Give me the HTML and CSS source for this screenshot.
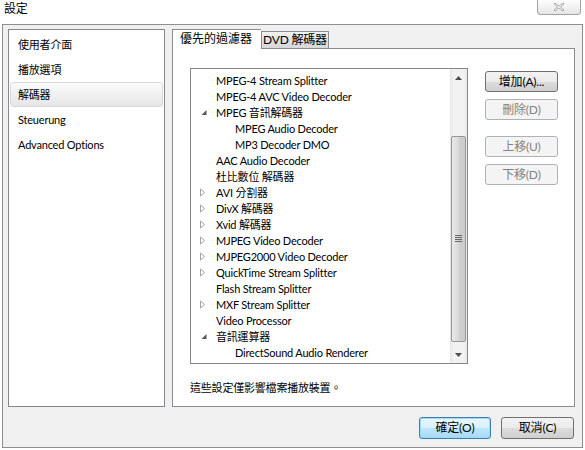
FILE: index.html
```html
<!DOCTYPE html>
<html lang="zh-Hant">
<head>
    <meta charset="UTF-8">
    <title>設定</title>
    <link rel="stylesheet" href="styles.css">
</head>
<body>
    <div class="titlebar">
        <span class="title">設定</span>
        <div class="close">
            <svg width="14" height="10" viewBox="0 0 14 10">
                <path d="M3 1 L7 4 L11 1 L12 2 L8.5 5 L12 8 L11 9 L7 6 L3 9 L2 8 L5.5 5 L2 2 Z" fill="#f4f4f4" stroke="#9a9a9a" stroke-width="0.8"/>
            </svg>
        </div>
    </div>

    <div class="frame">
        <div class="main">
            <ul class="nav">
                <li>使用者介面</li>
                <li>播放選項</li>
                <li class="selected">解碼器</li>
                <li>Steuerung</li>
                <li>Advanced Options</li>
            </ul>

            <div class="tabs">
                <div class="tab-strip">
                    <div class="tab active">優先的過濾器</div>
                    <div class="tab">DVD 解碼器</div>
                </div>
                <div class="tab-panel">
                    <div class="panel-row">
                        <div class="listbox">
                            <ul class="tree">
                                <li class="lvl0"><span class="tog"></span>MPEG-4 Stream Splitter</li>
                                <li class="lvl0"><span class="tog"></span>MPEG-4 AVC Video Decoder</li>
                                <li class="lvl0"><span class="tog open"></span>MPEG 音訊解碼器</li>
                                <li class="lvl1"><span class="tog"></span>MPEG Audio Decoder</li>
                                <li class="lvl1"><span class="tog"></span>MP3 Decoder DMO</li>
                                <li class="lvl0"><span class="tog"></span>AAC Audio Decoder</li>
                                <li class="lvl0"><span class="tog"></span>杜比數位 解碼器</li>
                                <li class="lvl0"><span class="tog shut"></span>AVI 分割器</li>
                                <li class="lvl0"><span class="tog shut"></span>DivX 解碼器</li>
                                <li class="lvl0"><span class="tog shut"></span>Xvid 解碼器</li>
                                <li class="lvl0"><span class="tog shut"></span>MJPEG Video Decoder</li>
                                <li class="lvl0"><span class="tog shut"></span>MJPEG2000 Video Decoder</li>
                                <li class="lvl0"><span class="tog shut"></span>QuickTime Stream Splitter</li>
                                <li class="lvl0"><span class="tog"></span>Flash Stream Splitter</li>
                                <li class="lvl0"><span class="tog shut"></span>MXF Stream Splitter</li>
                                <li class="lvl0"><span class="tog"></span>Video Processor</li>
                                <li class="lvl0"><span class="tog open"></span>音訊運算器</li>
                                <li class="lvl1"><span class="tog"></span>DirectSound Audio Renderer</li>
                            </ul>
                            <div class="scrollbar">
                                <div class="sb-arrow">
                                    <svg width="7" height="4" viewBox="0 0 7 4"><path d="M0 4 L3.5 0 L7 4 Z" fill="#4d4d4d"/></svg>
                                </div>
                                <div class="sb-track">
                                    <div class="sb-thumb">
                                        <svg width="7" height="8" viewBox="0 0 7 8">
                                            <path d="M0 0.5 H7 M0 2.5 H7 M0 4.5 H7 M0 6.5 H7" stroke="#666" stroke-width="1"/>
                                        </svg>
                                    </div>
                                </div>
                                <div class="sb-arrow">
                                    <svg width="7" height="4" viewBox="0 0 7 4"><path d="M0 0 L3.5 4 L7 0 Z" fill="#4d4d4d"/></svg>
                                </div>
                            </div>
                        </div>
                        <div class="side-buttons">
                            <div class="btn">增加(A)...</div>
                            <div class="btn disabled">刪除(D)</div>
                            <div class="btn disabled gap">上移(U)</div>
                            <div class="btn disabled">下移(D)</div>
                        </div>
                    </div>
                    <p class="note">這些設定僅影響檔案播放裝置。</p>
                </div>
            </div>
        </div>

        <div class="footer">
            <div class="btn default">確定(O)</div>
            <div class="btn">取消(C)</div>
        </div>
    </div>
</body>
</html>
```

FILE: styles.css
```css
* {
    box-sizing: border-box;
}

body {
    margin: 0;
    width: 585px;
    height: 450px;
    background-color: #ffffff;
    font-family: 'Lato', 'Noto Sans CJK TC', sans-serif;
    font-size: 11px;
    letter-spacing: -0.2px;
    color: #000;
}

ul {
    list-style: none;
    margin: 0;
    padding: 0;
}

/* title bar */
.titlebar {
    height: 24px;
    display: flex;
    justify-content: space-between;
    align-items: flex-start;
    padding-left: 4px;
    padding-right: 4px;
}

.title {
    font-size: 12px;
    line-height: 18px;
}

.close {
    width: 44px;
    height: 15px;
    border: 1px solid #a3a3a3;
    border-top: none;
    border-radius: 0 0 4px 4px;
    background: linear-gradient(#fdfdfd, #e6e6e6);
    display: flex;
    justify-content: center;
    align-items: center;
}

/* dialog body */
.frame {
    margin: 0 2px;
    height: 424px;
    border: 1px solid #8e8f8f;
    background-color: #f0f0f0;
    padding: 4px 7px 8px 5px;
}

.main {
    display: flex;
    gap: 7px;
    height: 378px;
}

.nav {
    width: 157px;
    border: 1px solid #828790;
    background-color: #fff;
    padding: 2px 1px;
}

.nav li {
    height: 25px;
    line-height: 23px;
    padding-left: 7px;
    border: 1px solid transparent;
    border-radius: 3px;
}

.nav li.selected {
    border-color: #dadada;
    background: linear-gradient(#fbfbfb, #e6e6e6);
}

/* tabs */
.tabs {
    flex: 1;
    display: flex;
    flex-direction: column;
}

.tab-strip {
    display: flex;
    align-items: flex-end;
    height: 19px;
    position: relative;
    z-index: 1;
}

.tab {
    width: 68px;
    height: 17px;
    line-height: 15px;
    font-size: 12px;
    text-align: center;
    border: 1px solid #898c95;
    border-bottom: none;
    background: linear-gradient(#f3f3f3, #e1e1e1 50%, #d8d8d8);
}

.tab.active {
    width: 89px;
    height: 20px;
    line-height: 17px;
    text-align: left;
    padding: 0 7px;
    margin-bottom: -1px;
    letter-spacing: 0;
    background: #fff;
    border-right: none;
}

.tab-panel {
    flex: 1;
    border: 1px solid #898c95;
    background-color: #fff;
    padding: 19px 0 0 17px;
}

.panel-row {
    display: flex;
    gap: 17px;
}

/* tree list */
.listbox {
    width: 278px;
    height: 296px;
    border: 1px solid #828790;
    display: flex;
}

.tree {
    flex: 1;
    padding-top: 4px;
}

.tree li {
    height: 16px;
    line-height: 16px;
    display: flex;
    align-items: center;
    white-space: nowrap;
}

.tree .lvl0 {
    padding-left: 8px;
}

.tree .lvl1 {
    padding-left: 27px;
}

.tog {
    width: 12px;
    height: 16px;
    margin-right: 5px;
}

.tog.open {
    background: no-repeat center / 12px 16px url("data:image/svg+xml,%3Csvg xmlns='http://www.w3.org/2000/svg' width='12' height='16'%3E%3Cpath d='M7.5 5 L7.5 10 L2.5 10 Z' fill='%23595959'/%3E%3C/svg%3E");
}

.tog.shut {
    background: no-repeat center / 12px 16px url("data:image/svg+xml,%3Csvg xmlns='http://www.w3.org/2000/svg' width='12' height='16'%3E%3Cpath d='M1.5 4 L5.5 7.5 L1.5 11 Z' fill='%23fff' stroke='%23a6a6a6'/%3E%3C/svg%3E");
}

/* scrollbar */
.scrollbar {
    width: 17px;
    display: flex;
    flex-direction: column;
    background: linear-gradient(90deg, #e6e6e6, #f2f2f2 20%, #f2f2f2 80%, #e9e9e9);
}

.sb-arrow {
    height: 17px;
    display: flex;
    justify-content: center;
    align-items: center;
}

.sb-track {
    flex: 1;
    display: flex;
    padding: 50px 1px 4px;
}

.sb-thumb {
    flex: 1;
    border: 1px solid #979797;
    border-radius: 2px;
    background: linear-gradient(90deg, #e9e9e9, #dcdcdc 45%, #d0d0d0 55%, #cbcbcb);
    display: flex;
    justify-content: center;
    align-items: center;
}

/* buttons */
.side-buttons {
    padding-top: 3px;
    display: flex;
    flex-direction: column;
    gap: 7px;
}

.btn {
    width: 73px;
    height: 21px;
    line-height: 19px;
    font-size: 12px;
    text-align: center;
    border: 1px solid #707070;
    border-radius: 3px;
    background: linear-gradient(#f2f2f2, #ebebeb 50%, #dddddd 51%, #cfcfcf);
}

.btn.disabled {
    color: #838383;
    border-color: #adb2b5;
    background: #f4f4f4;
}

.btn.gap {
    margin-top: 9px;
}

.note {
    margin: 16px 0 0 0;
    line-height: 16px;
}

.footer {
    display: flex;
    justify-content: flex-end;
    gap: 10px;
    margin-top: 10px;
    padding-right: 1px;
}

.footer .btn {
    height: 22px;
    line-height: 20px;
}

.footer .default {
    width: 72px;
    border-color: #3c7fb1;
    box-shadow: inset 0 0 0 1px #9ddcf7;
    background: linear-gradient(#eaf6fd, #d9f0fc 50%, #bee6fd 51%, #a7d9f5);
}
```
